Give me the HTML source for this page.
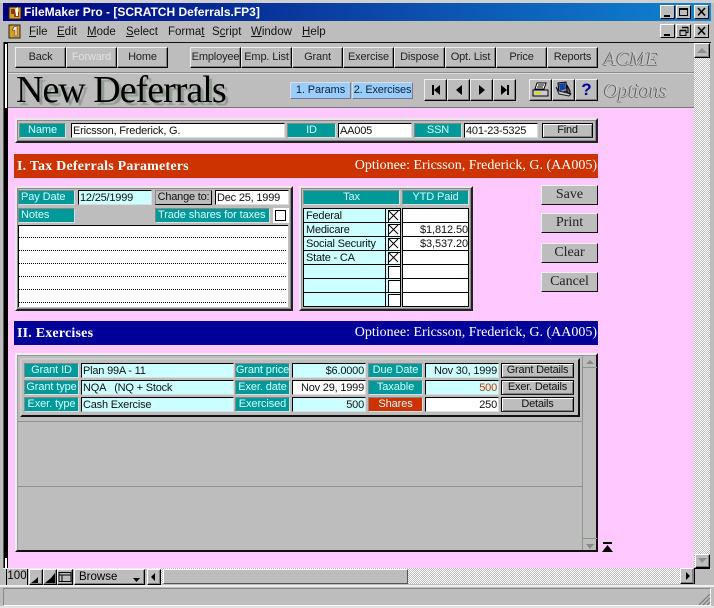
<!DOCTYPE html>
<html><head><meta charset="utf-8"><style>
html,body{margin:0;padding:0}
body{width:714px;height:608px;overflow:hidden;background:#bdbdbd;position:relative;font:11px/1 "Liberation Sans",sans-serif;color:#000}
div,svg,span.a{position:absolute;box-sizing:border-box}
.t{display:flex;align-items:center;justify-content:center;white-space:nowrap;overflow:hidden}
.m{top:25px;font-size:11.5px;line-height:14px;white-space:nowrap;color:#111}
.m u{text-decoration:underline}
.w{background:#bdbdbd;border:1px solid;border-color:#fff #000 #000 #fff;box-shadow:inset -1px -1px #808080}
.btn{background:#bdbdbd;border:1px solid;border-color:#eee #000 #000 #eee;box-shadow:inset -1px -1px #808080;top:47px;height:21px;width:51px;font-size:11px;letter-spacing:-.15px;color:#222}
.nav{background:#bdbdbd;border:1px solid;border-color:#eee #000 #000 #eee;box-shadow:inset -1px -1px #808080;top:79px;height:22px;width:23px}
.panel{background:#bdbdbd;border:2px solid;border-color:#e8e8e8 #222 #222 #e8e8e8;box-shadow:inset -1px -1px #888,inset 1px 1px #888}
.l{background:#009999;color:#d8ffff;border:1px solid;border-color:#888 #ddd #ddd #888;font-size:11px;letter-spacing:-.1px;height:15px;white-space:nowrap;overflow:hidden}
.f{background:#ccffff;border:1px solid;border-color:#000 #ddd #ddd #000;height:15px;padding:0 1px;font-size:11px;letter-spacing:-.2px;line-height:14px;white-space:nowrap;overflow:hidden;color:#111}
.fw{background:#fff}
.r{text-align:right}
.b2{background:#bdbdbd;border:1px solid;border-color:#000 #000 #222 #000;box-shadow:inset 1px 1px #fff,inset -1px -1px #808080;font-size:11px;letter-spacing:-.2px;height:15px;color:#111}
.side{background:#bdbdbd;border:1px solid;border-color:#eee #111 #111 #eee;left:541px;width:57px;height:20px;font:14px "Liberation Serif",serif;color:#222}
.bar{left:14px;width:584px;height:24px;color:#fff;font-family:"Liberation Serif",serif}
.bar b{position:absolute;left:3px;top:6px;font-size:14px;letter-spacing:.2px;white-space:nowrap}
.bar span{position:absolute;right:1px;top:5px;font-size:14px;white-space:nowrap}
.chk{background:#fff;border:1px solid #000}
.rw{left:303px;width:82px;height:15px;background:#ccffff;border:1px solid #000;font-size:11px;letter-spacing:-.2px;line-height:14px;padding-left:2px;color:#111;border-right:0;white-space:nowrap;overflow:hidden}
.ck{left:385px;width:16px;height:15px;background:#ccffff;border:1px solid #000;border-left-width:1px}
.ck i{position:absolute;left:2px;top:1px;width:11px;height:11px;border:1px solid #000;background:#fff}
.y{left:402px;width:67px;height:15px;background:#fff;border:1px solid #000;font-size:11px;letter-spacing:-.1px;line-height:14px;text-align:right;color:#111;white-space:nowrap;overflow:hidden}
.dots{left:19px;width:267px;height:0;border-top:1px dotted #000}
.chkr{background-color:#bdbdbd;background-image:conic-gradient(#fff 25%,#bdbdbd 0 50%,#fff 0 75%,#bdbdbd 0);background-size:2px 2px}
.capt{top:5px;width:15px;height:14px;background:#bdbdbd;border:1px solid;border-color:#fff #000 #000 #fff}
.sm{font:italic 20px "Liberation Serif",serif;color:#c8c8c8;text-shadow:-1px 0 #555,0 1px #777;white-space:nowrap}
</style></head><body>
<div style="left:0;top:0;width:714px;height:3px;background:#d0d0d0"></div>
<!-- title -->
<div style="left:3px;top:3px;width:708px;height:18px;background:linear-gradient(90deg,#000080 0%,#0a3ea0 45%,#1084d0 100%)"></div>
<svg style="left:8px;top:5px" width="15" height="15" viewBox="0 0 15 15"><rect x="1" y="2" width="12" height="12" fill="#d8a020" stroke="#222"/><path d="M3 4h5v3h3v5H6V9H3z" fill="#8a3a10"/><path d="M7 4l3-2v9H8z" fill="#fff"/></svg>
<div style="left:24px;top:5px;color:#fff;font:bold 12px/14px 'Liberation Sans',sans-serif;white-space:nowrap">FileMaker Pro - [SCRATCH Deferrals.FP3]</div>
<div class="capt t" style="left:660px"><svg width="13" height="12" style="left:0;top:0"><rect x="3" y="9" width="6" height="2" fill="#000"/></svg></div>
<div class="capt t" style="left:676px"><svg width="13" height="12" style="left:0;top:0"><rect x="2.500" y="2.500" width="8" height="7" fill="none" stroke="#000"/><rect x="2" y="2" width="9" height="2" fill="#000"/></svg></div>
<div class="capt t" style="left:694px"><svg width="13" height="12" style="left:0;top:0"><path d="M3 2l7 7.500M10 2L3 9.500" stroke="#000" stroke-width="1.600"/></svg></div>
<!-- menu -->
<svg style="left:8px;top:24px" width="14" height="15" viewBox="0 0 14 15"><rect x="1" y="1" width="11" height="13" fill="#d8a020" stroke="#222"/><path d="M6 3l3-1v10H7V6H4z" fill="#fff" stroke="#622" stroke-width=".6"/></svg>
<div class="m" style="left:29px"><u>F</u>ile</div>
<div class="m" style="left:57px"><u>E</u>dit</div>
<div class="m" style="left:87px"><u>M</u>ode</div>
<div class="m" style="left:126px"><u>S</u>elect</div>
<div class="m" style="left:168px">Forma<u>t</u></div>
<div class="m" style="left:212px">S<u>c</u>ript</div>
<div class="m" style="left:251px"><u>W</u>indow</div>
<div class="m" style="left:302px"><u>H</u>elp</div>
<div class="capt" style="left:660px;top:24px"><svg width="13" height="12" style="left:0;top:0"><rect x="3" y="9" width="6" height="2" fill="#000"/></svg></div>
<div class="capt" style="left:676px;top:24px"><svg width="13" height="12" style="left:0;top:0"><path d="M5 2.500h6v5H9M3 5.500h6v5H3z" fill="none" stroke="#000"/><path d="M5 2.500h6M3 5.500h6" stroke="#000" stroke-width="1.500"/></svg></div>
<div class="capt" style="left:694px;top:24px"><svg width="13" height="12" style="left:0;top:0"><path d="M3 2l7 7.500M10 2L3 9.500" stroke="#000" stroke-width="1.600"/></svg></div>
<!-- frame -->
<div style="left:3px;top:42px;width:708px;height:1px;background:#111"></div>
<div style="left:3px;top:42px;width:2px;height:526px;background:#555"></div>
<div style="left:4px;top:42px;width:4px;height:526px;background:#000"></div>
<div style="left:5px;top:44px;width:2px;height:64px;background:#fff"></div>
<div style="left:5px;top:558px;width:2px;height:10px;background:#fff"></div>
<div style="left:8px;top:43px;width:686px;height:65px;background:#bdbdbd"></div>
<div style="left:8px;top:72px;width:686px;height:2px;background:#8a8a8a;border-bottom:1px solid #ddd"></div>
<div style="left:8px;top:107px;width:686px;height:1px;background:#777"></div>
<div style="left:8px;top:108px;width:686px;height:460px;background:#ffc8ff"></div>
<!-- toolbar -->
<div class="btn t" style="left:15px">Back</div>
<div class="btn t" style="left:66px;color:#e0e0e0">Forward</div>
<div class="btn t" style="left:117px">Home</div>
<div class="btn t" style="left:190px">Employee</div>
<div class="btn t" style="left:241px">Emp. List</div>
<div class="btn t" style="left:292px">Grant</div>
<div class="btn t" style="left:343px">Exercise</div>
<div class="btn t" style="left:394px">Dispose</div>
<div class="btn t" style="left:445px">Opt. List</div>
<div class="btn t" style="left:496px">Price</div>
<div class="btn t" style="left:547px">Reports</div>
<div class="sm" style="left:604px;top:48px">ACME</div>
<div style="left:16px;top:72px;font:38px/36px 'Liberation Serif',serif;letter-spacing:-1px;white-space:nowrap;color:#000;text-shadow:3px 3px 1px #8f9a8f">New Deferrals</div>
<div class="t" style="left:290px;top:82px;width:61px;height:17px;background:#99ccff;border:1px solid;border-color:#ddd #778 #778 #ddd;font-size:11px;letter-spacing:-.1px;color:#123">1. Params</div>
<div class="t" style="left:352px;top:82px;width:61px;height:17px;background:#99ccff;border:1px solid;border-color:#ddd #778 #778 #ddd;font-size:11px;letter-spacing:-.2px;color:#123">2. Exercises</div>
<div class="nav" style="left:424px"><svg width="21" height="20" style="left:0;top:0"><path d="M7 5h2v10H7zM15 5v10l-6-5z" fill="#000"/></svg></div>
<div class="nav" style="left:447px"><svg width="21" height="20" style="left:0;top:0"><path d="M14 5v10l-6-5z" fill="#000"/></svg></div>
<div class="nav" style="left:470px"><svg width="21" height="20" style="left:0;top:0"><path d="M8 5v10l6-5z" fill="#000"/></svg></div>
<div class="nav" style="left:493px"><svg width="21" height="20" style="left:0;top:0"><path d="M13 5h2v10h-2zM7 5v10l6-5z" fill="#000"/></svg></div>
<div class="nav" style="left:529px"><svg width="21" height="20" style="left:0;top:0"><path d="M7 3h9l-2 6H5z" fill="#fff" stroke="#000"/><path d="M3 10h15v6H3z" fill="#ccc" stroke="#000"/><path d="M5 13h6" stroke="#dd0" stroke-width="2"/><path d="M8 5h6M7 7h6" stroke="#000"/></svg></div>
<div class="nav" style="left:552px"><svg width="21" height="20" style="left:0;top:0"><path d="M5 3l8-1 1 9-8 2z" fill="#99a" stroke="#000"/><path d="M6 4l6-1 1 6-6 2z" fill="#14a"/><path d="M3 7l3 7 10 2 2-2-12-3z" fill="#ccc" stroke="#222"/><path d="M14 5l3 6v3l-3-2z" fill="#667" stroke="#000"/></svg></div>
<div class="nav t" style="left:575px;font:bold 17px 'Liberation Sans',sans-serif;color:#000099">?</div>
<div class="sm" style="left:604px;top:80px">Options</div>
<!-- vertical scrollbar -->
<div class="chkr" style="left:694px;top:43px;width:16px;height:525px"></div>
<div class="w" style="left:694px;top:43px;width:16px;height:15px"><svg width="14" height="13" style="left:0;top:0"><path d="M7 4l-5 5h10z" fill="#8f8f8f"/></svg></div>
<div class="w" style="left:695px;top:554px;width:15px;height:14px"><svg width="13" height="12" style="left:0;top:0"><path d="M6 8L2 3h9z" fill="#8f8f8f"/></svg></div>
<!-- name panel -->
<div class="panel" style="left:15px;top:118px;width:583px;height:25px"></div>
<div class="l t" style="left:19px;top:123px;width:47px">Name</div>
<div class="f fw" style="left:71px;top:123px;width:214px">Ericsson, Frederick, G.</div>
<div class="l t" style="left:287px;top:123px;width:49px">ID</div>
<div class="f fw" style="left:338px;top:123px;width:74px">AA005</div>
<div class="l t" style="left:414px;top:123px;width:48px">SSN</div>
<div class="f fw" style="left:464px;top:123px;width:74px">401-23-5325</div>
<div class="b2 t" style="left:542px;top:123px;width:51px">Find</div>
<!-- red bar -->
<div class="bar" style="top:154px;background:#cc3300"><b>I. Tax Deferrals Parameters</b><span>Optionee: Ericsson, Frederick, G. (AA005)</span></div>
<!-- params panel -->
<div class="panel" style="left:15px;top:186px;width:278px;height:125px"></div>
<div class="l" style="left:18px;top:190px;width:57px;padding:1px 2px">Pay Date</div>
<div class="f" style="left:78px;top:190px;width:74px">12/25/1999</div>
<div class="b2 t" style="left:155px;top:190px;width:57px;border-color:#888 #000 #000 #888;box-shadow:none">Change to:</div>
<div class="f fw" style="left:215px;top:190px;width:74px">Dec 25, 1999</div>
<div class="l" style="left:18px;top:208px;width:57px;padding:1px 2px">Notes</div>
<div class="l" style="left:155px;top:208px;width:115px;padding:1px 2px">Trade shares for taxes</div>
<div style="left:273px;top:208px;width:16px;height:15px;background:#fff"></div>
<div class="chk" style="left:275px;top:210px;width:11px;height:11px"></div>
<div style="left:18px;top:225px;width:270px;height:82px;background:#fff;border:1px solid #000;border-width:1px 0 0 1px"></div>
<div class="dots" style="top:237px"></div>
<div class="dots" style="top:250px"></div>
<div class="dots" style="top:263px"></div>
<div class="dots" style="top:276px"></div>
<div class="dots" style="top:289px"></div>
<div class="dots" style="top:302px"></div>
<!-- tax panel -->
<div class="panel" style="left:299px;top:186px;width:174px;height:125px"></div>
<div class="l t" style="left:303px;top:190px;width:97px">Tax</div>
<div class="l t" style="left:402px;top:190px;width:67px">YTD Paid</div>
<div class="rw" style="top:208px">Federal</div><div class="ck" style="top:208px"><i></i><svg width="11" height="11" style="left:3px;top:2px"><path d="M0 0l9 9M9 0L0 9" stroke="#000"/></svg></div><div class="y" style="top:208px"></div>
<div class="rw" style="top:222px">Medicare</div><div class="ck" style="top:222px"><i></i><svg width="11" height="11" style="left:3px;top:2px"><path d="M0 0l9 9M9 0L0 9" stroke="#000"/></svg></div><div class="y" style="top:222px">$1,812.50</div>
<div class="rw" style="top:236px">Social Security</div><div class="ck" style="top:236px"><i></i><svg width="11" height="11" style="left:3px;top:2px"><path d="M0 0l9 9M9 0L0 9" stroke="#000"/></svg></div><div class="y" style="top:236px">$3,537.20</div>
<div class="rw" style="top:250px">State - CA</div><div class="ck" style="top:250px"><i></i><svg width="11" height="11" style="left:3px;top:2px"><path d="M0 0l9 9M9 0L0 9" stroke="#000"/></svg></div><div class="y" style="top:250px"></div>
<div class="rw" style="top:264px"></div><div class="ck" style="top:264px"><i></i></div><div class="y" style="top:264px"></div>
<div class="rw" style="top:278px"></div><div class="ck" style="top:278px"><i></i></div><div class="y" style="top:278px"></div>
<div class="rw" style="top:292px"></div><div class="ck" style="top:292px"><i></i></div><div class="y" style="top:292px"></div>
<!-- side buttons -->
<div class="side t" style="top:185px">Save</div>
<div class="side t" style="top:213px">Print</div>
<div class="side t" style="top:243px">Clear</div>
<div class="side t" style="top:272px">Cancel</div>
<!-- blue bar -->
<div class="bar" style="top:321px;background:#000099"><b>II. Exercises</b><span>Optionee: Ericsson, Frederick, G. (AA005)</span></div>
<!-- exercises panel -->
<div class="panel" style="left:15px;top:353px;width:583px;height:199px;border-color:#eee #111 #111 #eee;box-shadow:inset 1px 1px #999"></div>
<div style="left:18px;top:421px;width:565px;height:1px;background:#8a978a"></div>
<div style="left:18px;top:486px;width:565px;height:1px;background:#8a978a"></div>
<div style="left:582px;top:355px;width:1px;height:195px;background:#8a978a"></div>
<div style="left:583px;top:367px;width:14px;height:1px;background:#8a978a"></div>
<div style="left:583px;top:538px;width:14px;height:1px;background:#8a978a"></div>
<svg style="left:583px;top:355px" width="14" height="12"><path d="M7 5l-4 4h8z" fill="#888"/></svg>
<svg style="left:583px;top:540px" width="14" height="12"><path d="M7 9L3 4h8z" fill="#888"/></svg>
<div class="panel" style="left:20px;top:358px;width:560px;height:59px;border-color:#ccc #111 #111 #ccc;box-shadow:none"></div>
<div class="l t" style="left:24px;top:363px;width:55px">Grant ID</div>
<div class="f" style="left:81px;top:363px;width:153px">Plan 99A - 11</div>
<div class="l t" style="left:235px;top:363px;width:55px">Grant price</div>
<div class="f r" style="left:292px;top:363px;width:74px;border-left-color:#000">$6.0000</div>
<div class="l t" style="left:368px;top:363px;width:55px">Due Date</div>
<div class="f r" style="left:425px;top:363px;width:74px">Nov 30, 1999</div>
<div class="b2 t" style="left:501px;top:363px;width:73px">Grant Details</div>
<div class="l t" style="left:24px;top:380px;width:55px">Grant type</div>
<div class="f" style="left:81px;top:380px;width:153px;white-space:pre">NQA   (NQ + Stock</div>
<div class="l t" style="left:235px;top:380px;width:55px">Exer. date</div>
<div class="f r" style="left:292px;top:380px;width:74px;background:#fff;border-left-color:#000">Nov 29, 1999</div>
<div class="l t" style="left:368px;top:380px;width:55px">Taxable</div>
<div class="f r" style="left:425px;top:380px;width:74px;color:#cc3300">500</div>
<div class="b2 t" style="left:501px;top:380px;width:73px">Exer. Details</div>
<div class="l t" style="left:24px;top:397px;width:55px">Exer. type</div>
<div class="f" style="left:81px;top:397px;width:153px">Cash Exercise</div>
<div class="l t" style="left:235px;top:397px;width:55px">Exercised</div>
<div class="f r" style="left:292px;top:397px;width:74px;border-left-color:#000">500</div>
<div class="l t" style="left:368px;top:397px;width:55px;background:#cc3300">Shares</div>
<div class="f r fw" style="left:425px;top:397px;width:74px">250</div>
<div class="b2 t" style="left:501px;top:397px;width:73px">Details</div>
<!-- small arrow -->
<svg style="left:602px;top:542px" width="12" height="11"><path d="M1 0h9v2H1zM5.500 3L11 10H0z" fill="#000"/></svg>
<!-- bottom bar -->
<div style="left:3px;top:568px;width:708px;height:17px;background:#bdbdbd;border-top:1px solid #eee"></div>
<div class="t" style="left:6px;top:569px;width:22px;height:16px;border-right:1px solid #000;border-left:1px solid #000;font-size:11.5px">100</div>
<div class="w" style="left:29px;top:569px;width:14px;height:16px"><svg width="12" height="14" style="left:0;top:0"><path d="M1 13l4-3 3-3v6z" fill="#000"/></svg></div>
<div class="w" style="left:43px;top:569px;width:14px;height:16px"><svg width="12" height="14" style="left:0;top:0"><path d="M1 13l6-5 4-5v10z" fill="#000"/></svg></div>
<div class="w" style="left:57px;top:569px;width:16px;height:16px"><svg width="14" height="14" style="left:0;top:0"><rect x="1" y="2.500" width="12" height="9" fill="#bdbdbd" stroke="#000"/><path d="M1 5h12M4 5v7" stroke="#000"/></svg></div>
<div class="w" style="left:74px;top:569px;width:71px;height:16px;font-size:11.5px;line-height:14px;padding-left:4px">Browse<svg width="8" height="5" style="left:58px;top:8px"><path d="M0 0h7L3.500 4z" fill="#000"/></svg></div>
<div class="w" style="left:147px;top:569px;width:14px;height:16px;border-right-color:#000"><svg width="12" height="14" style="left:0;top:0"><path d="M7 3v8L3 7z" fill="#000"/></svg></div>
<div style="left:161px;top:568px;width:519px;height:16px" class="chkr"></div>
<div style="left:163px;top:569px;width:245px;height:15px;background:#bdbdbd;border:1px solid;border-color:#fff #555 #555 #fff"></div>
<div class="w" style="left:680px;top:568px;width:14px;height:16px;border-right-color:#888"><svg width="12" height="14" style="left:0;top:0"><path d="M5 3v8l4-4z" fill="#000"/></svg></div>
<div style="left:694px;top:568px;width:16px;height:16px;background:#bdbdbd;border-left:1px solid #000;border-top:1px solid #000"></div>
<!-- status -->
<div style="left:0;top:585px;width:714px;height:2px;background:#eee"></div>
<div style="left:3px;top:588px;width:708px;height:18px;background:#bdbdbd;border:1px solid;border-color:#888 #fff #fff #888"></div>
<svg style="left:698px;top:593px" width="13" height="13"><path d="M12 1L1 12M12 5L5 12M12 9L9 12" stroke="#777" stroke-width="1.200"/></svg>
<div style="left:0;top:606px;width:714px;height:2px;background:#e4e4e4"></div>
</body></html>
